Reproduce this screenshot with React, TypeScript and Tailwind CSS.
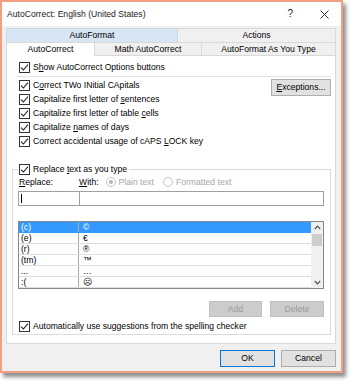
import React from "react";

const font = { fontFamily: '"Liberation Sans", Arial, sans-serif' };

const Check = () => (
  <span className="w-[11px] h-[11px] border border-[#333333] bg-white flex items-center justify-center shrink-0">
    <svg width="9" height="9" viewBox="0 0 9 9">
      <path d="M1 4.6 L3.4 7 L8 1.6" fill="none" stroke="#222" strokeWidth="1.1" />
    </svg>
  </span>
);

const CheckRow = ({ children }: { children: React.ReactNode }) => (
  <div className="h-[14px] flex items-center gap-[3px]">
    <Check />
    <span className="text-black">{children}</span>
  </div>
);

const U = ({ children }: { children: React.ReactNode }) => (
  <span className="underline underline-offset-1">{children}</span>
);

const Radio = ({ on }: { on?: boolean }) => (
  <span className="w-[10px] h-[10px] rounded-full border border-[#c4c4c4] bg-white flex items-center justify-center shrink-0">
    {on && <span className="w-[4px] h-[4px] rounded-full bg-[#b5b5b5]" />}
  </span>
);

const Chevron = ({ up }: { up?: boolean }) => (
  <svg width="7" height="5" viewBox="0 0 7 5">
    <path
      d={up ? "M0.8 4 L3.5 1.2 L6.2 4" : "M0.8 1 L3.5 3.8 L6.2 1"}
      fill="none"
      stroke="#555"
      strokeWidth="1.2"
    />
  </svg>
);

const entries = [
  ["(c)", "©"],
  ["(e)", "€"],
  ["(r)", "®"],
  ["(tm)", "™"],
  ["...", "…"],
  [":(", "☹"],
];

export default function App() {
  return (
    <div className="w-[353px] h-[384px] bg-white text-[8.6px] leading-none" style={font}>
      <div className="w-[343px] h-[373px] border-2 border-[#f0a080] bg-[#f0f0f0] flex flex-col shadow-[3px_4px_4px_rgba(0,0,0,0.45)]">
        {/* title bar */}
        <div className="h-[24px] bg-white flex items-center pl-[5px] pr-[12px] text-[#1a1a1a]">
          <span className="text-[8.6px]">AutoCorrect: English (United States)</span>
          <span className="ml-auto text-[10px] mr-[27px]">?</span>
          <svg width="9" height="9" viewBox="0 0 9 9">
            <path d="M0.5 0.5 L8.5 8.5 M8.5 0.5 L0.5 8.5" stroke="#333" strokeWidth="1" />
          </svg>
        </div>

        {/* body */}
        <div className="flex-1 flex flex-col pt-[2px] pl-[4px] pr-[5px]">
          {/* back tab row */}
          <div className="flex h-[14px] w-[330px]">
            <div className="w-[172px] bg-[#d8e6f3] border border-[#c9d9e8] border-b-0 flex items-center justify-center">
              AutoFormat
            </div>
            <div className="flex-1 bg-[#f0f0f0] border border-[#d9d9d9] border-l-0 border-b-0 flex items-center justify-center">
              Actions
            </div>
          </div>
          {/* front tab row */}
          <div className="flex h-[14px] w-[330px] -mb-px relative">
            <div className="w-[89px] bg-white border border-[#d9d9d9] border-b-0 flex items-center justify-center">
              AutoCorrect
            </div>
            <div className="w-[107px] bg-[#f0f0f0] border border-[#d9d9d9] border-l-0 flex items-center justify-center">
              Math AutoCorrect
            </div>
            <div className="flex-1 bg-[#f0f0f0] border border-[#d9d9d9] border-l-0 flex items-center justify-center">
              AutoFormat As You Type
            </div>
          </div>

          {/* tab panel */}
          <div className="w-[330px] h-[289px] bg-white border border-[#d9d9d9] flex flex-col">
            <div className="pt-[4px] pl-[12px]">
              <CheckRow>
                S<U>h</U>ow AutoCorrect Options buttons
              </CheckRow>
            </div>
            <div className="mt-[2px] ml-[10px] mr-[4px] h-px bg-[#e3e3e3]" />
            <div className="flex mt-[1px] pl-[12px] pr-[4px]">
              <div className="flex flex-col">
                <CheckRow>
                  C<U>o</U>rrect TWo INitial CApitals
                </CheckRow>
                <CheckRow>
                  Capitalize first letter of <U>s</U>entences
                </CheckRow>
                <CheckRow>
                  Capitalize first letter of table <U>c</U>ells
                </CheckRow>
                <CheckRow>
                  Capitalize <U>n</U>ames of days
                </CheckRow>
                <CheckRow>
                  Correct accidental usage of cAPS <U>L</U>OCK key
                </CheckRow>
              </div>
              <button className="ml-auto mt-[1px] w-[60px] h-[17px] bg-[#e1e1e1] border border-[#adadad] text-black flex items-center justify-center">
                <U>E</U>xceptions...
              </button>
            </div>

            {/* group */}
            <fieldset className="mt-[14px] ml-[5px] mr-[4px] border border-[#dcdcdc] pl-[5px] pr-[6px] pb-[1px]">
              <legend className="pl-[1px] pr-[2px] bg-white">
                <CheckRow>
                  Replace <U>t</U>ext as you type
                </CheckRow>
              </legend>
              <div className="h-[12px] flex items-center">
                <span className="w-[61px] pl-[1px]">
                  <U>R</U>eplace:
                </span>
                <span>
                  <U>W</U>ith:
                </span>
                <span className="ml-[7px] flex items-center gap-[3px] text-[#a6a6a6]">
                  <Radio on />
                  Plain text
                </span>
                <span className="ml-[9px] flex items-center gap-[3px] text-[#a6a6a6]">
                  <Radio />
                  Formatted text
                </span>
              </div>
              <div className="mt-[3px] flex h-[15px]">
                <div className="w-[62px] border border-[#a0a0a0] bg-white flex items-center pl-[2px]">
                  <span className="w-px h-[9px] bg-black" />
                </div>
                <div className="flex-1 border border-[#a0a0a0] border-l-0 bg-white" />
              </div>
              <div className="mt-[15px] h-[68px] border border-[#828790] bg-white flex">
                <div className="flex-1 flex flex-col">
                  {entries.map(([a, b], i) => (
                    <div
                      key={i}
                      className={
                        i === 0
                          ? "h-[11px] flex bg-[#3399ff] text-white border-b border-[#3399ff]"
                          : "h-[11px] flex border-b border-[#dedede] text-black"
                      }
                    >
                      <span className="w-[60px] pl-[2px] flex items-center border-r border-[#a9a9a9]">{a}</span>
                      <span className="pl-[4px] flex items-center">{b}</span>
                    </div>
                  ))}
                </div>
                <div className="w-[12px] bg-[#f0f0f0] flex flex-col items-center">
                  <div className="h-[11px] flex items-center justify-center">
                    <Chevron up />
                  </div>
                  <div className="w-[10px] h-[12px] bg-[#cdcdcd] mt-[1px]" />
                  <div className="mt-auto h-[11px] flex items-center justify-center">
                    <Chevron />
                  </div>
                </div>
              </div>
              <div className="mt-[12px] flex justify-end gap-[8px]">
                <div className="w-[53px] h-[16px] bg-[#cccccc] border border-[#bfbfbf] text-[#9a9a9a] flex items-center justify-center">
                  Add
                </div>
                <div className="w-[54px] h-[16px] bg-[#cccccc] border border-[#bfbfbf] text-[#9a9a9a] flex items-center justify-center">
                  Delete
                </div>
              </div>
              <div className="mt-[2px] pl-[1px]">
                <CheckRow>Automatically use suggestions from the spelling checker</CheckRow>
              </div>
            </fieldset>
          </div>

          {/* dialog buttons */}
          <div className="mt-[6px] flex justify-end gap-[6px] pr-0">
            <button className="w-[55px] h-[17px] bg-[#e1e1e1] border border-[#0078d7] text-black flex items-center justify-center">
              OK
            </button>
            <button className="w-[55px] h-[17px] bg-[#e1e1e1] border border-[#adadad] text-black flex items-center justify-center">
              Cancel
            </button>
          </div>
        </div>
      </div>
    </div>
  );
}
